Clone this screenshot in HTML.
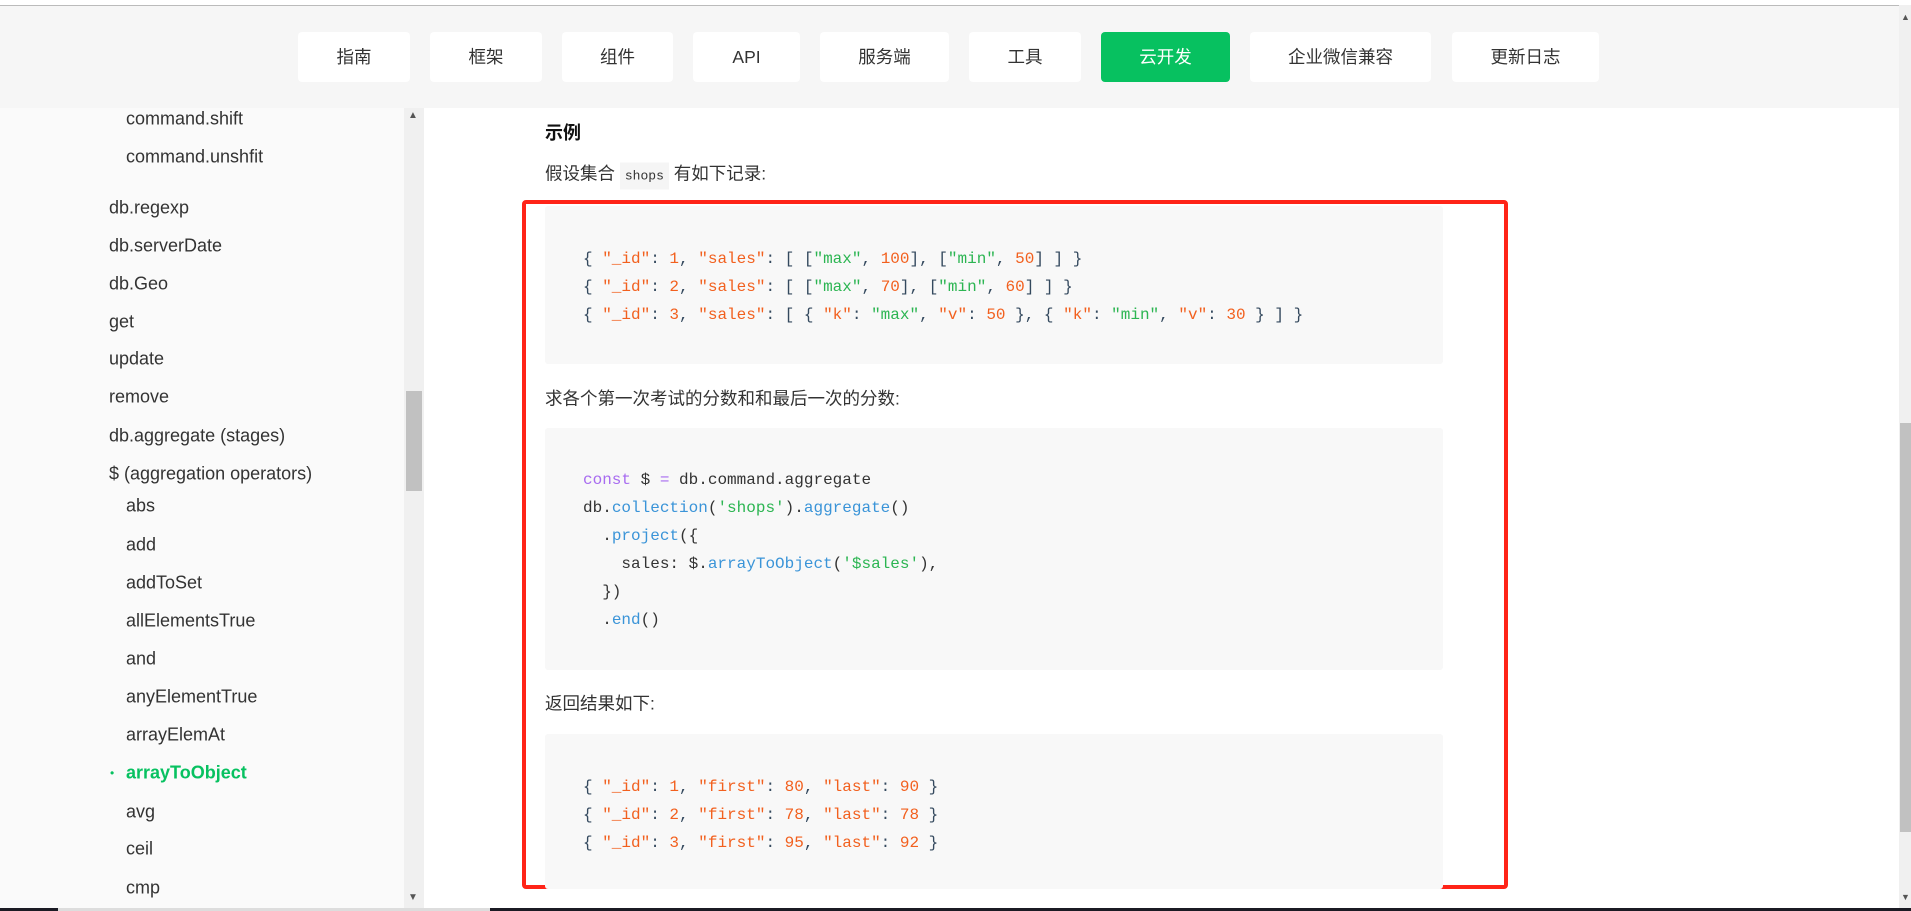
<!DOCTYPE html>
<html><head><meta charset="utf-8"><style>
*{margin:0;padding:0;box-sizing:border-box}
body{width:1911px;height:911px;overflow:hidden;background:#fff;position:relative;font-family:"Liberation Sans","Noto Sans CJK SC",sans-serif;color:#333}
.a{position:absolute;white-space:pre}
.hdr{position:absolute;left:0;width:1899px;background:#f6f6f6;border-top:1px solid #bbb;top:5px;height:103px}
.btn{position:absolute;top:32px;height:50px;background:#fff;border-radius:4px;font-size:17.5px;line-height:50px;text-align:center;color:#333}
.btn.on{background:#07c160;color:#fff}
.side{position:absolute;left:0;top:108px;width:404px;height:800px;background:#fafafa}
.si{position:absolute;font-size:18px;color:#333;transform:translateY(-50%);white-space:nowrap}
.code{position:absolute;left:545px;width:898px;background:#f8f8f8;border-radius:3px}
.cl{position:absolute;left:583px;font-family:"Liberation Mono",monospace;font-size:16px;letter-spacing:0;color:#34495e;transform:translateY(-50%);white-space:pre}
.k{color:#f2601e}.g{color:#2cb552}.p{color:#a86cf0}.b{color:#3a94d8}
.t{position:absolute;left:545px;font-size:17.5px;transform:translateY(-50%);white-space:nowrap}
</style></head><body>
<div class="hdr"></div>
<div class="btn" style="left:298px;width:112px">指南</div>
<div class="btn" style="left:430px;width:112px">框架</div>
<div class="btn" style="left:562px;width:111px">组件</div>
<div class="btn" style="left:693px;width:107px">API</div>
<div class="btn" style="left:820px;width:129px">服务端</div>
<div class="btn" style="left:969px;width:112px">工具</div>
<div class="btn on" style="left:1101px;width:129px">云开发</div>
<div class="btn" style="left:1250px;width:181px">企业微信兼容</div>
<div class="btn" style="left:1452px;width:147px">更新日志</div>

<div class="side"></div>
<div style="position:absolute;left:404px;top:108px;width:20px;height:800px;background:#f0f0f0"></div>
<div style="position:absolute;left:406px;top:391px;width:16px;height:100px;background:#c1c1c1"></div>
<div class="a" style="left:408px;top:110px;font-size:10px;color:#555">▲</div>
<div class="a" style="left:408px;top:892px;font-size:10px;color:#555">▼</div>

<div style="position:absolute;left:1899px;top:5px;width:12px;height:903px;background:#f0f0f0"></div>
<div style="position:absolute;left:1900px;top:423px;width:11px;height:409px;background:#c1c1c1"></div>
<div class="a" style="left:1901px;top:12px;font-size:9px;color:#555">▲</div>
<div class="a" style="left:1901px;top:892px;font-size:9px;color:#555">▼</div>
<div style="position:absolute;left:0;top:908px;width:1911px;height:3px;background:#1b1b24"></div>
<div style="position:absolute;left:58px;top:908px;width:432px;height:3px;background:#ddd"></div>

<div class="si" style="left:126px;top:119px">command.shift</div>
<div class="si" style="left:126px;top:157px">command.unshfit</div>
<div class="si" style="left:109px;top:208px">db.regexp</div>
<div class="si" style="left:109px;top:246px">db.serverDate</div>
<div class="si" style="left:109px;top:284px">db.Geo</div>
<div class="si" style="left:109px;top:322px">get</div>
<div class="si" style="left:109px;top:359px">update</div>
<div class="si" style="left:109px;top:397px">remove</div>
<div class="si" style="left:109px;top:436px">db.aggregate (stages)</div>
<div class="si" style="left:109px;top:474px">$ (aggregation operators)</div>
<div class="si" style="left:126px;top:506px">abs</div>
<div class="si" style="left:126px;top:545px">add</div>
<div class="si" style="left:126px;top:583px">addToSet</div>
<div class="si" style="left:126px;top:621px">allElementsTrue</div>
<div class="si" style="left:126px;top:659px">and</div>
<div class="si" style="left:126px;top:697px">anyElementTrue</div>
<div class="si" style="left:126px;top:735px">arrayElemAt</div>
<div class="si" style="left:110px;top:773px;color:#07c160;font-size:12px">•</div>
<div class="si" style="left:126px;top:773px;color:#07c160;font-weight:bold">arrayToObject</div>
<div class="si" style="left:126px;top:812px">avg</div>
<div class="si" style="left:126px;top:849px">ceil</div>
<div class="si" style="left:126px;top:888px">cmp</div>

<div class="t" style="top:132px;font-weight:bold;font-size:18px;color:#111">示例</div>
<div class="t" style="top:173px">假设集合 <span style="background:#f5f5f5;font-family:'Liberation Mono',monospace;font-size:13px;padding:6px 5px">shops</span> 有如下记录:</div>

<div style="position:absolute;left:522px;top:200px;width:986px;height:689px;border:4px solid #ff2418;border-radius:4px"></div>

<div class="code" style="top:206px;height:158px"></div>
<div class="cl" style="top:259px">{ <span class="k">"_id"</span>: <span class="k">1</span>, <span class="k">"sales"</span>: [ [<span class="g">"max"</span>, <span class="k">100</span>], [<span class="g">"min"</span>, <span class="k">50</span>] ] }</div>
<div class="cl" style="top:287px">{ <span class="k">"_id"</span>: <span class="k">2</span>, <span class="k">"sales"</span>: [ [<span class="g">"max"</span>, <span class="k">70</span>], [<span class="g">"min"</span>, <span class="k">60</span>] ] }</div>
<div class="cl" style="top:315px">{ <span class="k">"_id"</span>: <span class="k">3</span>, <span class="k">"sales"</span>: [ { <span class="k">"k"</span>: <span class="g">"max"</span>, <span class="k">"v"</span>: <span class="k">50</span> }, { <span class="k">"k"</span>: <span class="g">"min"</span>, <span class="k">"v"</span>: <span class="k">30</span> } ] }</div>

<div class="t" style="top:398px">求各个第一次考试的分数和和最后一次的分数:</div>
<div class="code" style="top:428px;height:242px"></div>
<div class="cl" style="top:480px;color:#333"><span class="p">const</span> $ <span class="p">=</span> db.command.aggregate</div>
<div class="cl" style="top:508px;color:#333">db.<span class="b">collection</span>(<span class="g">'shops'</span>).<span class="b">aggregate</span>()</div>
<div class="cl" style="top:536px;color:#333">  .<span class="b">project</span>({</div>
<div class="cl" style="top:564px;color:#333">    sales: $.<span class="b">arrayToObject</span>(<span class="g">'$sales'</span>),</div>
<div class="cl" style="top:592px;color:#333">  })</div>
<div class="cl" style="top:620px;color:#333">  .<span class="b">end</span>()</div>

<div class="t" style="top:703px">返回结果如下:</div>
<div class="code" style="top:734px;height:155px"></div>
<div class="cl" style="top:787px">{ <span class="k">"_id"</span>: <span class="k">1</span>, <span class="k">"first"</span>: <span class="k">80</span>, <span class="k">"last"</span>: <span class="k">90</span> }</div>
<div class="cl" style="top:815px">{ <span class="k">"_id"</span>: <span class="k">2</span>, <span class="k">"first"</span>: <span class="k">78</span>, <span class="k">"last"</span>: <span class="k">78</span> }</div>
<div class="cl" style="top:843px">{ <span class="k">"_id"</span>: <span class="k">3</span>, <span class="k">"first"</span>: <span class="k">95</span>, <span class="k">"last"</span>: <span class="k">92</span> }</div>
</body></html>
